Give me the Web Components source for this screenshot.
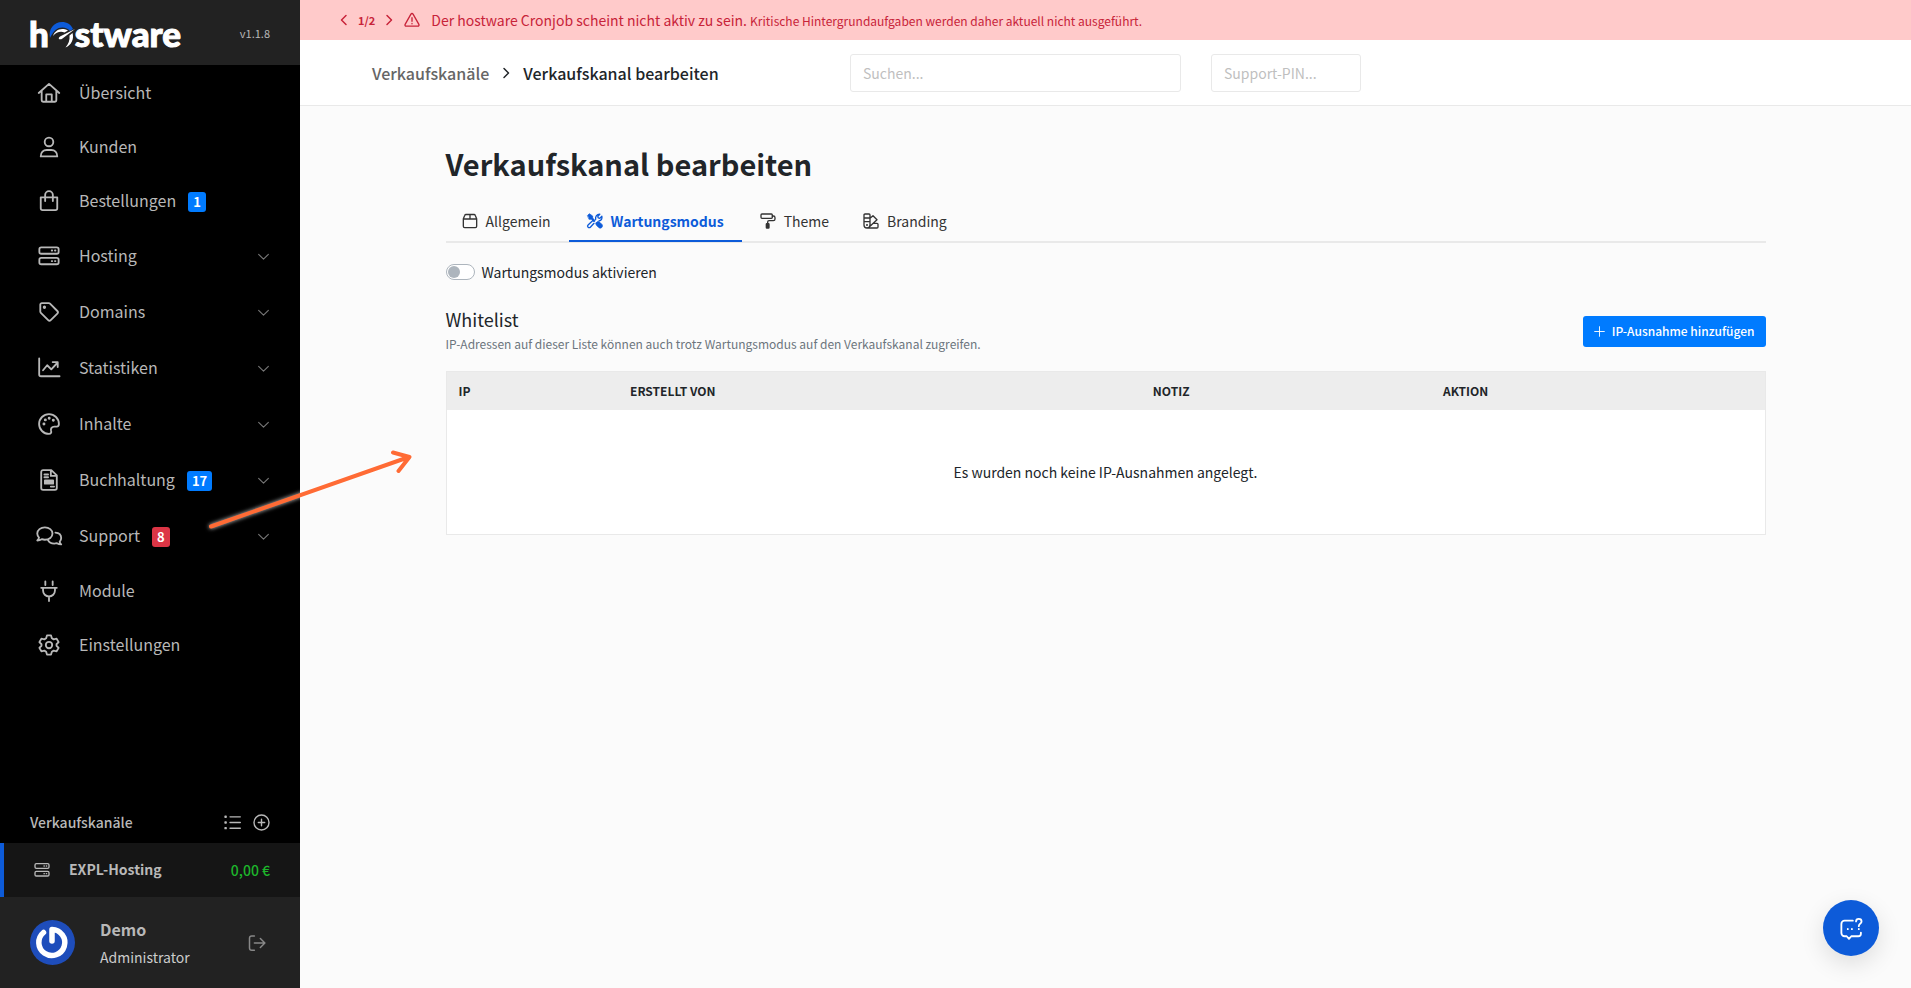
<!DOCTYPE html>
<html lang="de">
<head>
<meta charset="utf-8">
<meta name="viewport" content="width=device-width, initial-scale=1">
<title>Verkaufskanal bearbeiten</title>
<style>
  html, body { margin: 0; }
  body {
    display: flex;
    min-height: 100vh;
    background: #fbfbfb;
    color: #212529;
    font: 14px/20px "Noto Sans CJK SC", "Noto Sans", sans-serif;
  }
  hw-page { flex: 1; min-width: 0; }
</style>
</head>
<body>
  <hw-sidebar>
    <hw-nav-item icon="home">Übersicht</hw-nav-item>
    <hw-nav-item icon="user">Kunden</hw-nav-item>
    <hw-nav-item icon="bag" badge="1">Bestellungen</hw-nav-item>
    <hw-nav-item icon="server" more>Hosting</hw-nav-item>
    <hw-nav-item icon="tag" more>Domains</hw-nav-item>
    <hw-nav-item icon="chart" more>Statistiken</hw-nav-item>
    <hw-nav-item icon="palette" more>Inhalte</hw-nav-item>
    <hw-nav-item icon="invoice" badge="17" more>Buchhaltung</hw-nav-item>
    <hw-nav-item icon="chats" badge="8" tone="danger" more>Support</hw-nav-item>
    <hw-nav-item icon="plug">Module</hw-nav-item>
    <hw-nav-item icon="gear">Einstellungen</hw-nav-item>
    <hw-channel slot="channels" amount="0,00 €">EXPL-Hosting</hw-channel>
    <hw-account slot="account" role-name="Administrator">Demo</hw-account>
  </hw-sidebar>

  <hw-page>
    <hw-alert slot="alert" count="1/2">
      Der hostware Cronjob scheint nicht aktiv zu sein.
      <small slot="detail">Kritische Hintergrundaufgaben werden daher aktuell nicht ausgeführt.</small>
    </hw-alert>
    <hw-topbar slot="top" parent="Verkaufskanäle">Verkaufskanal bearbeiten</hw-topbar>
    <span slot="title">Verkaufskanal bearbeiten</span>
    <hw-tabs>
      <hw-tab icon="box">Allgemein</hw-tab>
      <hw-tab icon="tools" active>Wartungsmodus</hw-tab>
      <hw-tab icon="roller">Theme</hw-tab>
      <hw-tab icon="swatch">Branding</hw-tab>
    </hw-tabs>
    <hw-switch>Wartungsmodus aktivieren</hw-switch>
    <hw-whitelist></hw-whitelist>
  </hw-page>

  <hw-chat-button></hw-chat-button>
  <hw-pointer></hw-pointer>

<script>
const ICONS = {
  home: '<path d="M.8 12 12 2l11.200 10M4 9.500v10.500a1.500 1.500 0 0 0 1.500 1.500h13a1.500 1.500 0 0 0 1.500-1.500V9.500M9 21.500V13.500h6v8"/>',
  user: '<circle cx="12" cy="6.500" r="4.700"/><path d="M3 22.300c0-4.300 2.800-7 6.500-7h5c3.700 0 6.500 2.700 6.500 7z"/>',
  bag: '<path d="M3 8h18v12a2 2 0 0 1-2 2H5a2 2 0 0 1-2-2zM7.800 12V5.500a4.200 4.200 0 0 1 8.400 0V12"/>',
  server: '<rect x="1.500" y="2.500" width="21" height="7" rx="2"/><rect x="1.500" y="14" width="21" height="7" rx="2"/><path d="M15 6h.5M18.500 6h.5M15 17.500h.5M18.500 17.500h.5"/>',
  tag: '<path d="M2.500 4v7.500a2 2 0 0 0 .6 1.400l8 8a2 2 0 0 0 2.800 0l7.200-7.200a2 2 0 0 0 0-2.800l-8-8A2 2 0 0 0 11.700 2.300H4.200A1.700 1.700 0 0 0 2.500 4z"/><circle cx="7" cy="6.800" r=".8" fill="currentColor"/>',
  chart: '<path d="M1.300 1.500V19a2 2 0 0 0 2 2H23.500M5.500 14.500l4.500-5.500 4.500 4.500 7-7.500M16 5.500h5.500V11"/>',
  palette: '<path d="M12 1.200a10.800 10.800 0 1 0 0 21.600c2 0 2.900-1.500 2.300-3.200-.8-2.600.8-4.800 3.500-4.800h2.700c1.600 0 2.300-1 2.300-2.800A10.800 10.800 0 0 0 12 1.200z"/><g fill="currentColor" stroke-width="1.200"><circle cx="6.500" cy="12" r="1"/><circle cx="8" cy="7.500" r="1"/><circle cx="12.200" cy="5.800" r="1"/><circle cx="16.700" cy="8" r="1"/></g>',
  invoice: '<path d="M14.500 1.200H5.500a2 2 0 0 0-2 2v17.600a2 2 0 0 0 2 2h13a2 2 0 0 0 2-2V7zM14 1.500V7.500h6M7 6h4M7 9h4M14 19.200h3.500"/><path fill="currentColor" d="M7.500 12.500h9v3.500h-9z"/>',
  chats: '<path d="M7.500 2.500c-4.700 0-8.300 3-8.300 6.800 0 1.700.7 3.200 1.900 4.400-.2 1.200-.9 2.300-1.900 3.200 1.900 0 3.600-.5 4.900-1.400 1 .4 2.200.6 3.400.6 4.700 0 8.300-3 8.300-6.800s-3.600-6.800-8.300-6.800z"/><path d="M19 8.300c4 .2 6.300 2.800 6.300 6 0 1.500-.6 2.900-1.700 4 .2 1.100.8 2.100 1.700 2.900-1.800 0-3.300-.4-4.600-1.300-1 .3-2 .5-3 .5-3.100 0-5.700-1.500-6.800-3.800"/>',
  plug: '<path d="M8 1.500v4M16 1.500v4M3.500 8.500h17M5.500 8.500v3a6.500 6.500 0 0 0 13 0v-3M12 18v5"/>',
  gear: '<path d="M9.800 1.500h4.400l.9 3.200 2 1.200 3.200-.8 2.200 3.800L20.200 11.200v1.600l2.300 2.300-2.200 3.800-3.200-.8-2 1.200-.9 3.200H9.800l-.9-3.200-2-1.200-3.200.8-2.200-3.800 2.300-2.300v-1.600L1.500 8.900l2.200-3.800 3.200.8 2-1.200z"/><circle cx="12" cy="12" r="3.500"/>',
  down: '<path d="M3 8l9 9 9-9"/>',
  left: '<path d="M16 3l-9 9 9 9"/>',
  right: '<path d="M8 3l9 9-9 9"/>',
  list: '<path d="M8.500 4H23M8.500 12H23M8.500 20H23"/><g fill="currentColor"><path d="M1.500 3.200h1.500v1.500H1.500zM1.500 11.200h1.500v1.500H1.500zM1.500 19.200h1.500v1.500H1.500z"/></g>',
  add: '<circle cx="12" cy="12" r="10.600"/><path d="M12 7.500v9M7.500 12h9"/>',
  logout: '<path d="M8.500 2.500H5a3 3 0 0 0-3 3v13a3 3 0 0 0 3 3h3.500M8.500 12H22.500M16.500 6l6 6-6 6"/>',
  warning: '<path d="M10.400 3.200 1.700 18.500a1.800 1.800 0 0 0 1.600 2.700h17.400a1.800 1.800 0 0 0 1.600-2.700L13.600 3.200a1.800 1.800 0 0 0-3.200 0zM12 8.500v5.500M12 17.200v.5"/>',
  box: '<path d="M2 8.500 4.200 3.500A2 2 0 0 1 6 2.200h12a2 2 0 0 1 1.800 1.300L22 8.500V20a2 2 0 0 1-2 2H4a2 2 0 0 1-2-2zM2 9h20M12 2.500V9"/>',
  tools: '<path fill="currentColor" stroke-width="1" d="M1 3.500 3.500 1l5 3.500v3l4 4-2 2-4-4h-3zM13.500 15l2-2c1.500-.4 2.800 0 4 1.200l3 3c1.600 1.800.4 5.500-2.500 5.500-1 0-1.900-.4-2.600-1.100l-3-3c-1-1-1.300-2.300-.9-3.600z"/><path d="M10.500 15.500 5 21.300a2.300 2.300 0 0 1-3.400-3.300l8-7.500M13 9.500c-.8-4 1.800-8 6.200-7.700l-3 3 .6 2.500 2.500.6 3-3c.6 3.200-1.200 6.200-4.300 6.800"/>',
  roller: '<rect x="1.500" y="1.500" width="17" height="6.500" rx="1.500"/><path d="M18.500 4.500H20a2.500 2.500 0 0 1 2.500 2.500v2A2.500 2.500 0 0 1 20 11.500h-6.500a2 2 0 0 0-2 2V16"/><rect x="9.500" y="16" width="4" height="6.500" rx=".8" fill="currentColor"/>',
  swatch: '<path d="M1.500 3a1.500 1.500 0 0 1 1.500-1.500h6A1.500 1.500 0 0 1 10.500 3v15a4.500 4.500 0 0 1-9 0zM1.500 7.500h9M1.500 13h9M10.500 8l4.500-4 6 6L8.500 21.800M15.500 15.500H21a1.500 1.500 0 0 1 1.500 1.500v4a1.500 1.500 0 0 1-1.500 1.500H6"/><circle cx="6" cy="18" r=".6"/>',
  plus: '<path d="M12 1.500v21M1.500 12h21"/>',
  help: '<path d="M14 4H5A3.500 3.500 0 0 0 1.500 7.500v10A3.500 3.500 0 0 0 5 21h2.300l2.500 2.800 2.500-2.800h7.700a2.800 2.800 0 0 0 2.800-2.800V17M17.500 4.800c0-3.600 6-3.600 6 0 0 2.400-3 2.500-3 5.200M20.500 13v.3M8.500 13v.3M13 13v.3"/>'
};

class HwIcon extends HTMLElement {
  connectedCallback() {
    this.attachShadow({ mode: 'open' });
    this.shadowRoot.innerHTML = `
      <style>
        :host { display: block; flex: none; width: 22px; height: 22px; }
        svg { display: block; width: 100%; height: 100%; overflow: visible; }
      </style>
      <svg viewBox="0 0 24 24" fill="none" stroke="currentColor" stroke-width="${this.getAttribute('weight') || 2}"
        stroke-linecap="round" stroke-linejoin="round" aria-hidden="true">${ICONS[this.getAttribute('name')]}</svg>
    `;
  }
}
customElements.define('hw-icon', HwIcon);

class HwLogo extends HTMLElement {
  connectedCallback() {
    this.attachShadow({ mode: 'open' });
    this.shadowRoot.innerHTML = `
      <style>
        :host { display: block; }
        a {
          display: flex;
          align-items: center;
          color: #fff;
          text-decoration: none;
          font: 900 35px/36px Lato, sans-serif;
          -webkit-text-stroke: 1px #fff;
        }
        svg { width: 26px; height: 28px; overflow: visible; }
      </style>
      <a href="#" aria-label="hostware">
        <span>h</span>
        <svg viewBox="0 0 26 28" aria-hidden="true">
          <path fill="#0d5bd9" d="M1 19C-1 10 5 3 13 3c5 0 9 2.500 11 7l-3 2c-3-4-10-5-14.500-1C4 13 2.500 16 1 19z"/>
          <path fill="#fff" d="M4 17c2-6 8-9 15-5.500l-3.500 2c-4-1.500-8-.5-11.500 3.500z"/>
          <path fill="#fff" d="M26 10 13.500 19.500c-2 1.500-4.500 1-3.500-1 .5-.8 1.400-1.300 2.500-1.800z"/>
          <path fill="#fff" d="M23.500 14c1.800 6-1 12-7 14.500 3-3.500 4.500-7.500 4-12z"/>
        </svg>
        <span>stware</span>
      </a>
    `;
  }
}
customElements.define('hw-logo', HwLogo);

class HwSidebar extends HTMLElement {
  connectedCallback() {
    this.attachShadow({ mode: 'open' });
    this.shadowRoot.innerHTML = `
      <style>
        :host {
          display: flex;
          flex-direction: column;
          flex: none;
          width: 300px;
          background: #000;
          color: #b8b8b8;
        }
        header {
          display: flex;
          align-items: center;
          justify-content: space-between;
          height: 65px;
          padding: 0 30px 0 29px;
          background: #222;
        }
        header small { font-size: 11px; }
        nav { flex: 1; padding-top: 1px; }
        .head {
          display: flex;
          align-items: center;
          gap: 12px;
          padding: 0 30px 11px;
          font-weight: 500;
        }
        .head span { flex: 1; }
        button { padding: 0; border: 0; background: none; color: inherit; cursor: pointer; }
        button hw-icon { width: 17px; height: 17px; }
      </style>
      <header><hw-logo></hw-logo><small>v1.1.8</small></header>
      <nav><slot></slot></nav>
      <div class="head">
        <span>Verkaufskanäle</span>
        <button aria-label="Liste"><hw-icon name="list"></hw-icon></button>
        <button aria-label="Hinzufügen"><hw-icon name="add"></hw-icon></button>
      </div>
      <slot name="channels"></slot>
      <slot name="account"></slot>
    `;
  }
}
customElements.define('hw-sidebar', HwSidebar);

class HwNavItem extends HTMLElement {
  connectedCallback() {
    const badge = this.getAttribute('badge');
    this.attachShadow({ mode: 'open' });
    this.shadowRoot.innerHTML = `
      <style>
        :host { display: block; }
        a {
          display: flex;
          align-items: center;
          height: 54px;
          padding: 0 30px 0 38px;
          color: inherit;
          text-decoration: none;
          font-size: 16px;
        }
        :host([more]) a { height: 56px; }
        .name { margin: 0 12px 0 19px; padding-bottom: 2px; }
        .badge {
          margin-top: 2px;
          padding: 0 5px;
          border-radius: 3px;
          background: #007bff;
          color: #fff;
          font-size: 13px;
          font-weight: 700;
        }
        :host([tone="danger"]) .badge { background: #dc3545; }
        .more { width: 13px; height: 13px; margin-left: auto; color: #777; }
      </style>
      <a href="#">
        <hw-icon name="${this.getAttribute('icon')}"></hw-icon>
        <span class="name"><slot></slot></span>
        ${badge ? `<span class="badge">${badge}</span>` : ''}
        ${this.hasAttribute('more') ? '<hw-icon class="more" name="down"></hw-icon>' : ''}
      </a>
    `;
  }
}
customElements.define('hw-nav-item', HwNavItem);

class HwChannel extends HTMLElement {
  connectedCallback() {
    this.attachShadow({ mode: 'open' });
    this.shadowRoot.innerHTML = `
      <style>
        :host { display: block; }
        a {
          display: flex;
          align-items: center;
          height: 54px;
          padding: 0 30px;
          border-left: 4px solid #0d5bd9;
          background: #151515;
          color: inherit;
          text-decoration: none;
          font-weight: 700;
        }
        hw-icon { width: 16px; height: 16px; margin-right: 19px; }
        .name { flex: 1; padding-bottom: 2px; }
        .amount { color: #1db52b; font-weight: 500; }
      </style>
      <a href="#">
        <hw-icon name="server"></hw-icon>
        <span class="name"><slot></slot></span>
        <span class="amount">${this.getAttribute('amount')}</span>
      </a>
    `;
  }
}
customElements.define('hw-channel', HwChannel);

class HwAccount extends HTMLElement {
  connectedCallback() {
    this.attachShadow({ mode: 'open' });
    this.shadowRoot.innerHTML = `
      <style>
        :host {
          display: flex;
          align-items: center;
          height: 91px;
          padding: 0 34px 0 30px;
          background: #222;
        }
        .avatar { width: 45px; height: 45px; margin-right: 25px; }
        .who { flex: 1; line-height: 28px; color: #ccc; }
        .who b { display: block; font-size: 16px; color: #b8b8b8; }
        button { padding: 0; border: 0; background: none; color: #888; cursor: pointer; }
        hw-icon { width: 18px; height: 18px; }
      </style>
      <svg class="avatar" viewBox="0 0 45 45" aria-hidden="true">
        <circle cx="22.500" cy="22.500" r="22.500" fill="#1e4dbb"/>
        <path d="M13.500 12.500a13 13 0 1 0 8.500-3v11.500" fill="none" stroke="#fff" stroke-width="5.500" stroke-linecap="round" stroke-linejoin="round"/>
      </svg>
      <div class="who"><b><slot></slot></b>${this.getAttribute('role-name')}</div>
      <button aria-label="Abmelden"><hw-icon name="logout"></hw-icon></button>
    `;
  }
}
customElements.define('hw-account', HwAccount);

class HwPage extends HTMLElement {
  connectedCallback() {
    this.attachShadow({ mode: 'open' });
    this.shadowRoot.innerHTML = `
      <style>
        :host { display: block; }
        main { max-width: 1320px; margin: 0 auto; padding: 37px 40px; }
        h1 { margin: 0 0 19px; font-size: 29px; line-height: 40px; font-weight: 700; }
      </style>
      <slot name="alert"></slot>
      <slot name="top"></slot>
      <main>
        <h1><slot name="title"></slot></h1>
        <slot></slot>
      </main>
    `;
  }
}
customElements.define('hw-page', HwPage);

class HwAlert extends HTMLElement {
  connectedCallback() {
    this.attachShadow({ mode: 'open' });
    this.shadowRoot.innerHTML = `
      <style>
        :host {
          display: flex;
          align-items: center;
          height: 40px;
          padding: 0 38px;
          background: #ffcaca;
          color: #c82339;
        }
        button { padding: 0; border: 0; background: none; color: inherit; cursor: pointer; }
        button hw-icon { width: 12px; height: 12px; }
        b { margin: 0 8px; font-size: 11px; }
        .warn { width: 16px; height: 16px; margin: 0 11px 0 9px; }
        ::slotted(small) { font-size: 12px; }
      </style>
      <button aria-label="Zurück"><hw-icon name="left" weight="3"></hw-icon></button>
      <b>${this.getAttribute('count')}</b>
      <button aria-label="Weiter"><hw-icon name="right" weight="3"></hw-icon></button>
      <hw-icon class="warn" name="warning"></hw-icon>
      <span><slot></slot> <slot name="detail"></slot></span>
    `;
  }
}
customElements.define('hw-alert', HwAlert);

class HwTopbar extends HTMLElement {
  connectedCallback() {
    this.attachShadow({ mode: 'open' });
    this.shadowRoot.innerHTML = `
      <style>
        :host {
          display: flex;
          align-items: center;
          height: 65px;
          padding: 0 72px;
          border-bottom: 1px solid #e9e9e9;
          background: #fff;
        }
        .crumbs {
          display: flex;
          align-items: center;
          width: 478px;
          font-size: 16px;
          font-weight: 500;
        }
        .crumbs a { color: #666; text-decoration: none; }
        .crumbs hw-icon { width: 12px; height: 12px; margin: 0 11px; }
        input {
          box-sizing: border-box;
          width: 331px;
          height: 38px;
          margin-right: 30px;
          padding: 0 12px;
          border: 1px solid #e9e9e9;
          border-radius: 3px;
          background: #fff;
          font: inherit;
        }
        input.pin { width: 150px; }
        input::placeholder { color: #bfbfbf; opacity: 1; }
      </style>
      <div class="crumbs">
        <a href="#">${this.getAttribute('parent')}</a>
        <hw-icon name="right" weight="3"></hw-icon>
        <span><slot></slot></span>
      </div>
      <input type="search" placeholder="Suchen..." aria-label="Suchen">
      <input class="pin" type="text" placeholder="Support-PIN..." aria-label="Support-PIN">
    `;
  }
}
customElements.define('hw-topbar', HwTopbar);

class HwTabs extends HTMLElement {
  connectedCallback() {
    this.attachShadow({ mode: 'open' });
    this.shadowRoot.innerHTML = `
      <style>
        :host { display: block; }
        nav { display: flex; gap: 2px; border-bottom: 2px solid #e9e9e9; }
      </style>
      <nav><slot></slot></nav>
    `;
  }
}
customElements.define('hw-tabs', HwTabs);

class HwTab extends HTMLElement {
  connectedCallback() {
    this.attachShadow({ mode: 'open' });
    this.shadowRoot.innerHTML = `
      <style>
        :host { display: block; margin-bottom: -1px; }
        a {
          display: flex;
          align-items: center;
          gap: 8px;
          height: 38px;
          padding: 0 16px;
          border-bottom: 2px solid transparent;
          color: #333;
          text-decoration: none;
        }
        hw-icon { width: 16px; height: 16px; }
        :host([active]) a { padding: 0 18px; border-color: #0d5bd9; color: #0d5bd9; font-weight: 700; }
      </style>
      <a href="#"><hw-icon name="${this.getAttribute('icon')}"></hw-icon><slot></slot></a>
    `;
  }
}
customElements.define('hw-tab', HwTab);

class HwSwitch extends HTMLElement {
  connectedCallback() {
    this.attachShadow({ mode: 'open' });
    this.shadowRoot.innerHTML = `
      <style>
        :host { display: block; margin: 19px 0 24px; }
        label { display: flex; align-items: center; gap: 7px; }
        input {
          appearance: none;
          box-sizing: border-box;
          width: 29px;
          height: 16px;
          margin: 0;
          padding: 1px;
          border: 1px solid #adb5bd;
          border-radius: 8px;
          background: #fff;
        }
        input::before {
          content: '';
          display: block;
          width: 12px;
          height: 12px;
          border-radius: 50%;
          background: #adb5bd;
        }
        input:checked::before { margin-left: auto; background: #0d5bd9; }
      </style>
      <label><input type="checkbox" role="switch"><slot></slot></label>
    `;
  }
}
customElements.define('hw-switch', HwSwitch);

class HwWhitelist extends HTMLElement {
  connectedCallback() {
    this.attachShadow({ mode: 'open' });
    this.shadowRoot.innerHTML = `
      <style>
        :host { display: block; }
        .head { display: flex; align-items: center; justify-content: space-between; margin-bottom: 15px; }
        h2 { margin: 0; font-size: 18px; line-height: 26px; font-weight: 400; }
        p { margin: 0; color: #6c757d; font-size: 12px; line-height: 24px; }
        button {
          display: flex;
          align-items: center;
          gap: 7px;
          height: 31px;
          padding: 0 11px;
          border: 0;
          border-radius: 3px;
          background: #007bff;
          color: #fff;
          font: inherit;
          font-size: 12px;
          font-weight: 500;
        }
        button hw-icon { width: 11px; height: 11px; }
        table {
          width: 100%;
          border: 1px solid #e9e9e9;
          border-collapse: collapse;
          table-layout: fixed;
          background: #fff;
        }
        th {
          box-sizing: border-box;
          height: 38px;
          padding: 0 12px;
          background: #ededed;
          text-align: left;
          font-size: 12px;
          font-weight: 700;
        }
        th:nth-child(1) { width: 172px; }
        th:nth-child(3) { width: 22%; }
        th:nth-child(4) { width: 334px; }
        td { height: 124px; padding: 0; text-align: center; }
      </style>
      <div class="head">
        <div>
          <h2>Whitelist</h2>
          <p>IP-Adressen auf dieser Liste können auch trotz Wartungsmodus auf den Verkaufskanal zugreifen.</p>
        </div>
        <button><hw-icon name="plus"></hw-icon>IP-Ausnahme hinzufügen</button>
      </div>
      <table>
        <thead><tr><th>IP</th><th>ERSTELLT VON</th><th>NOTIZ</th><th>AKTION</th></tr></thead>
        <tbody><tr><td colspan="4">Es wurden noch keine IP-Ausnahmen angelegt.</td></tr></tbody>
      </table>
    `;
  }
}
customElements.define('hw-whitelist', HwWhitelist);

class HwChatButton extends HTMLElement {
  connectedCallback() {
    this.attachShadow({ mode: 'open' });
    this.shadowRoot.innerHTML = `
      <style>
        :host { position: fixed; right: 32px; bottom: 32px; }
        button {
          display: flex;
          align-items: center;
          justify-content: center;
          width: 56px;
          height: 56px;
          border: 0;
          border-radius: 50%;
          background: #0d5bd9;
          color: #fff;
          box-shadow: 0 8px 24px rgba(0, 0, 0, .12);
        }
        hw-icon { width: 22px; height: 22px; }
      </style>
      <button aria-label="Hilfe"><hw-icon name="help"></hw-icon></button>
    `;
  }
}
customElements.define('hw-chat-button', HwChatButton);

// arrow from the Support entry into the page
class HwPointer extends HTMLElement {
  connectedCallback() {
    this.attachShadow({ mode: 'open' });
    this.shadowRoot.innerHTML = `
      <style>
        :host { position: absolute; left: 200px; top: 440px; pointer-events: none; }
        svg { display: block; filter: drop-shadow(0 0 2px rgba(255, 255, 255, .8)); }
      </style>
      <svg width="220" height="100" viewBox="0 0 220 100" fill="none" stroke="#ff6b35" stroke-width="4"
        stroke-linecap="round" stroke-linejoin="round" aria-hidden="true">
        <path d="M11 86.500 209 17M193 12.500l16.500 4.500-11 14"/>
      </svg>
    `;
  }
}
customElements.define('hw-pointer', HwPointer);
</script>
</body>
</html>
